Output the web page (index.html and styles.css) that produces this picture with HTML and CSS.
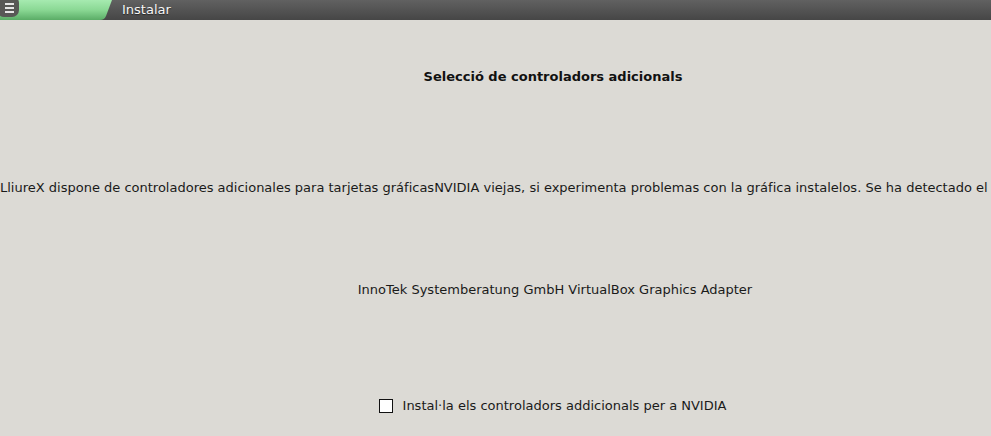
FILE: index.html
```html
<!DOCTYPE html>
<html lang="ca">
<head>
  <meta charset="UTF-8">
  <title>Instalar</title>
  <link rel="stylesheet" href="styles.css">
</head>
<body>
  <header class="topbar">
    <div class="tab">
      <svg class="tab-shape" width="114" height="20" viewBox="0 0 114 20">
        <defs>
          <linearGradient id="tabGreen" x1="0" y1="0" x2="0" y2="1">
            <stop offset="0" stop-color="#a6eab0"/>
            <stop offset="0.5" stop-color="#8ad894"/>
            <stop offset="1" stop-color="#5aac66"/>
          </linearGradient>
        </defs>
        <path d="M0 0 H112 L106 16 Q104.5 20 100 20 H0 Z" fill="url(#tabGreen)"/>
      </svg>
      <svg class="menu-icon" width="20" height="18" viewBox="0 0 20 18">
        <rect x="-3" y="-4" width="22" height="21" rx="7" fill="#585856"/>
        <rect x="5" y="3" width="9" height="2" fill="#e6e6e6"/>
        <rect x="5" y="7" width="9" height="2" fill="#e6e6e6"/>
        <rect x="5" y="11" width="9" height="2" fill="#e6e6e6"/>
      </svg>
    </div>
    <span class="window-title">Instalar</span>
  </header>

  <main class="content">
    <h1 class="heading">Selecció de controladors adicionals</h1>
    <p class="info">LliureX dispone de controladores adicionales para tarjetas gráficasNVIDIA viejas, si experimenta problemas con la gráfica instalelos. Se ha detectado el</p>
    <p class="adapter">InnoTek Systemberatung GmbH VirtualBox Graphics Adapter</p>
    <label class="check-row">
      <span class="check-box"></span>
      <span>Instal·la els controladors addicionals per a NVIDIA</span>
    </label>
  </main>
</body>
</html>
```

FILE: styles.css
```css
* {
  margin: 0;
  padding: 0;
  box-sizing: border-box;
}

html, body {
  height: 100%;
}

body {
  font-family: 'DejaVu Sans', sans-serif;
  font-size: 13px;
  color: #1a1a1a;
  background-color: #dcdad5;
  overflow: hidden;
}

.topbar {
  height: 20px;
  display: flex;
  align-items: center;
  background: linear-gradient(#616161, #464646);
}

.tab {
  position: relative;
  width: 114px;
  height: 20px;
  flex-shrink: 0;
}

.tab-shape {
  display: block;
}

.menu-icon {
  position: absolute;
  left: 0;
  top: 0;
}

.window-title {
  margin-left: 8px;
  color: #f6f6f6;
  font-size: 13px;
  line-height: 20px;
  text-shadow: 0 1px 1px rgba(0, 0, 0, 0.5);
}

.content {
  width: 1110px;
  display: flex;
  flex-direction: column;
  align-items: center;
  line-height: 16px;
}

.heading {
  margin-top: 49px;
  margin-right: 4px;
  font-size: 13px;
  font-weight: bold;
  color: #111;
}

.info {
  align-self: flex-start;
  margin-top: 95px;
  white-space: nowrap;
}

.adapter {
  margin-top: 86px;
}

.check-row {
  margin-top: 100px;
  margin-right: 5px;
  display: flex;
  align-items: center;
  gap: 10px;
}

.check-box {
  width: 14px;
  height: 14px;
  background: #fff;
  border: 1px solid #111;
}
```
